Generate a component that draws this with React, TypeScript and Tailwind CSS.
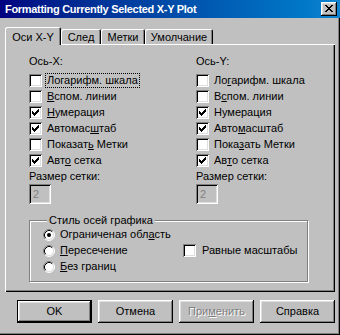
import React from "react";

const raised =
  "shadow-[inset_-1px_-1px_#000,inset_1px_1px_#fff,inset_-2px_-2px_#808080,inset_2px_2px_#dfdfdf]";
const sunken =
  "shadow-[inset_1px_1px_#808080,inset_-1px_-1px_#fff,inset_2px_2px_#000,inset_-2px_-2px_#dfdfdf]";

function Mn({ t, u }: { t: string; u?: number }) {
  if (u === undefined || u < 0) return <>{t}</>;
  return (
    <>
      {t.slice(0, u)}
      <span className="underline decoration-1 underline-offset-[1px]">{t[u]}</span>
      {t.slice(u + 1)}
    </>
  );
}

function Check({ on }: { on?: boolean }) {
  return (
    <span className={`block w-[13px] h-[13px] bg-white shrink-0 ${sunken}`}>
      {on && (
        <svg width="13" height="13" viewBox="0 0 13 13" shapeRendering="crispEdges">
          <g fill="#000" transform="translate(3 3)">
            <rect x="6" y="0" width="1" height="1" />
            <rect x="5" y="1" width="2" height="1" />
            <rect x="0" y="2" width="1" height="1" />
            <rect x="4" y="2" width="3" height="1" />
            <rect x="0" y="3" width="2" height="1" />
            <rect x="3" y="3" width="3" height="1" />
            <rect x="0" y="4" width="5" height="1" />
            <rect x="1" y="5" width="3" height="1" />
            <rect x="2" y="6" width="1" height="1" />
          </g>
        </svg>
      )}
    </span>
  );
}

function Radio({ on }: { on?: boolean }) {
  return (
    <svg width="12" height="12" viewBox="0 0 12 12" className="shrink-0">
      <circle cx="6" cy="6" r="5" fill="#fff" />
      <path d="M2.11 9.89 A5.5 5.5 0 0 1 9.89 2.11" fill="none" stroke="#808080" strokeWidth="1" />
      <path d="M9.89 2.11 A5.5 5.5 0 0 1 2.11 9.89" fill="none" stroke="#fff" strokeWidth="1" />
      <path d="M2.82 9.18 A4.5 4.5 0 0 1 9.18 2.82" fill="none" stroke="#000" strokeWidth="1" />
      <path d="M9.18 2.82 A4.5 4.5 0 0 1 2.82 9.18" fill="none" stroke="#dfdfdf" strokeWidth="1" />
      {on && <circle cx="6" cy="6" r="2" fill="#000" />}
    </svg>
  );
}

type Item = { t: string; u?: number; on?: boolean; focus?: boolean };

const xItems: Item[] = [
  { t: "Логарифм. шкала", focus: true },
  { t: "Вспом. линии", u: 0 },
  { t: "Нумерация", u: 0, on: true },
  { t: "Автомасштаб", u: 7, on: true },
  { t: "Показать Метки", u: 7 },
  { t: "Авто сетка", u: 3, on: true },
];

const yItems: Item[] = [
  { t: "Логарифм. шкала", u: 2 },
  { t: "Вспом. линии", u: 1 },
  { t: "Нумерация", on: true },
  { t: "Автомасштаб", u: 4, on: true },
  { t: "Показать Метки", u: 4 },
  { t: "Авто сетка", u: 2, on: true },
];

function AxisColumn({ title, items }: { title: string; items: Item[] }) {
  return (
    <div className="flex flex-col">
      <div className="h-[18px] leading-[14px]">{title}</div>
      {items.map((it) => (
        <div key={it.t} className="flex items-center h-[16px] gap-[4px]">
          <Check on={it.on} />
          <span
            className={`px-px leading-[13px] ${it.focus ? "outline outline-1 outline-dotted outline-black" : ""}`}
          >
            <Mn t={it.t} u={it.u} />
          </span>
        </div>
      ))}
      <div className="flex items-center h-[16px]">Размер сетки:</div>
      <div
        className={`w-[22px] h-[20px] bg-[#c0c0c0] text-[#808080] pl-[4px] leading-[20px] ${sunken}`}
      >
        2
      </div>
    </div>
  );
}

function Button({ children, def, disabled }: { children: React.ReactNode; def?: boolean; disabled?: boolean }) {
  return (
    <div
      className={`w-[75px] h-[23px] flex items-center justify-center bg-[#c0c0c0] ${
        def ? "border border-black" : ""
      } ${raised} ${disabled ? "text-[#808080] [text-shadow:1px_1px_0_#fff]" : ""}`}
    >
      {children}
    </div>
  );
}

export default function App() {
  return (
    <div className="w-[340px] h-[335px] bg-[#c0c0c0] flex flex-col text-[11px] text-black font-['Liberation_Sans',Arial,sans-serif] overflow-hidden select-none">
      {/* Title bar */}
      <div className="h-[18px] shrink-0 flex items-center justify-between pl-[5px] pr-[3px] bg-gradient-to-r from-[#000080] to-[#1084d0]">
        <span className="text-white font-bold text-[11px] tracking-[-0.3px]">
          Formatting Currently Selected X-Y Plot
        </span>
        <div className={`w-[16px] h-[14px] bg-[#c0c0c0] flex items-center justify-center ${raised}`}>
          <svg width="8" height="7" viewBox="0 0 8 7" shapeRendering="crispEdges" className="-mt-px -ml-px">
            <path
              fill="#000"
              d="M0 0h2v1h-2zM6 0h2v1h-2zM1 1h2v1h-2zM5 1h2v1h-2zM2 2h4v1h-4zM3 3h2v1h-2zM2 4h4v1h-4zM1 5h2v1h-2zM5 5h2v1h-2zM0 6h2v1h-2zM6 6h2v1h-2z"
            />
          </svg>
        </div>
      </div>

      {/* Body */}
      <div className="flex-1 flex flex-col pl-[5px] pr-[5px] pt-[9px] shadow-[inset_-1px_-1px_#000,inset_-2px_-2px_#808080]">
        {/* Tabs */}
        <div className="relative z-10 flex items-end h-[18px] -mb-px">
          <div className="w-[56px] h-[18px] flex items-center justify-center pt-[2px] bg-[#c0c0c0] rounded-t-[2px] shadow-[inset_1px_1px_#fff,inset_-1px_0_#000,inset_-2px_0_#808080]">
            Оси X-Y
          </div>
          {[
            ["След", "w-[40px]"],
            ["Метки", "w-[44px]"],
            ["Умолчание", "w-[68px]"],
          ].map(([t, w]) => (
            <div
              key={t}
              className={`${w} h-[15px] mb-px flex items-center justify-center pt-[2px] rounded-t-[2px] shadow-[inset_1px_1px_#fff,inset_-1px_0_#000,inset_-2px_0_#808080]`}
            >
              {t}
            </div>
          ))}
        </div>

        {/* Tab panel */}
        <div className="h-[248px] flex flex-col pt-[10px] pl-[24px] shadow-[inset_1px_1px_#fff,inset_-1px_-1px_#000,inset_-2px_-2px_#808080]">
          <div className="grid grid-cols-[167px_1fr]">
            <AxisColumn title="Ось-X:" items={xItems} />
            <AxisColumn title="Ось-Y:" items={yItems} />
          </div>

          <fieldset className="mt-[8px] w-[279px] h-[70px] border border-[#808080] shadow-[1px_1px_0_#fff,inset_1px_1px_0_#fff] pl-[13px]">
            <legend className="ml-[4px] px-[2px] bg-[#c0c0c0]">Стиль осей графика</legend>
            <div className="grid grid-cols-[140px_1fr] -mt-[2px]">
              <div className="flex flex-col">
                {[
                  { t: "Ограниченая область", u: 15, on: true },
                  { t: "Пересечение", u: 0 },
                  { t: "Без границ", u: 0 },
                ].map((r) => (
                  <div key={r.t} className="flex items-center h-[16px] gap-[5px]">
                    <Radio on={r.on} />
                    <span className="whitespace-nowrap">
                      <Mn t={r.t} u={r.u} />
                    </span>
                  </div>
                ))}
              </div>
              <div className="pt-[16px]">
                <div className="flex items-center h-[16px] gap-[6px]">
                  <Check />
                  <span>Равные масштабы</span>
                </div>
              </div>
            </div>
          </fieldset>
        </div>

        {/* Buttons */}
        <div className="flex justify-end gap-[6px] mt-[8px]">
          <Button def>OK</Button>
          <Button>Отмена</Button>
          <Button disabled>
            <Mn t="Применить" u={3} />
          </Button>
          <Button>Справка</Button>
        </div>
      </div>
    </div>
  );
}
